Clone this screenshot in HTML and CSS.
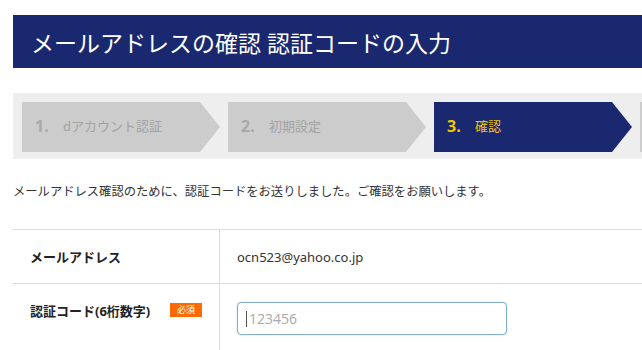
FILE: index.html
```html
<!DOCTYPE html>
<html lang="ja">
<head>
<meta charset="UTF-8">
<meta name="viewport" content="width=device-width, initial-scale=1.0">
<title>メールアドレスの確認 認証コードの入力</title>
<link rel="stylesheet" href="styles.css">
</head>
<body>
<div class="page">
  <h1 class="title-bar">メールアドレスの確認 認証コードの入力</h1>

  <div class="steps">
    <div class="step"><span class="step-num">1.</span><span class="step-label">dアカウント認証</span></div>
    <div class="step"><span class="step-num">2.</span><span class="step-label">初期設定</span></div>
    <div class="step current"><span class="step-num">3.</span><span class="step-label">確認</span></div>
    <div class="step"></div>
  </div>

  <p class="lead">メールアドレス確認のために、認証コードをお送りしました。ご確認をお願いします。</p>

  <div class="form-table">
    <div class="cell label">メールアドレス</div>
    <div class="cell value">ocn523@yahoo.co.jp</div>

    <div class="cell label top"><span>認証コード(6桁数字)</span><span class="required">必須</span></div>
    <div class="cell value top">
      <div class="code-field">
        <input type="text" class="code-input" placeholder="123456">
        <span class="caret"></span>
      </div>
    </div>
  </div>
</div>
</body>
</html>
```

FILE: styles.css
```css
body {
  margin: 0;
  padding: 0;
  overflow: hidden;
  background: #fff;
  font-family: "Noto Sans", "Noto Sans CJK JP", sans-serif;
  color: #333;
}

.page {
  width: 900px;
  padding: 15px 0 0 13px;
}

.title-bar {
  margin: 0;
  height: 53px;
  padding-left: 18px;
  display: flex;
  align-items: center;
  background-color: #1a2870;
  color: #fff;
  font-size: 23px;
  font-weight: 400;
}

.steps {
  margin-top: 25px;
  height: 66px;
  box-sizing: border-box;
  padding: 9px 0 0 9px;
  background-color: #eeeeee;
  display: flex;
  gap: 8px;
}

.step {
  width: 198px;
  height: 50px;
  flex-shrink: 0;
  box-sizing: border-box;
  padding: 0 0 3px 13px;
  display: flex;
  align-items: center;
  background-color: #cccccc;
  clip-path: polygon(0 0, calc(100% - 20px) 0, 100% 50%, calc(100% - 20px) 100%, 0 100%);
}

.step-num {
  font-family: "Open Sans", "Noto Sans CJK JP", sans-serif;
  font-size: 16px;
  font-weight: 700;
  color: #a8a8a8;
  width: 28px;
}

.step-label {
  font-size: 13px;
  color: #a3a3a3;
}

.step.current {
  background-color: #1a2870;
}

.step.current .step-num,
.step.current .step-label {
  color: #f4c400;
}

.lead {
  margin: 24px 0 0;
  font-size: 12.3px;
  line-height: 18px;
  color: #333;
}

.form-table {
  margin-top: 28px;
  width: 700px;
  border-top: 1px solid #dcdcdc;
  display: grid;
  grid-template-columns: 207px 1fr;
}

.cell {
  border-bottom: 1px solid #dcdcdc;
  height: 54px;
  display: flex;
  align-items: center;
  box-sizing: border-box;
}

.cell.label {
  border-right: 1px solid #dcdcdc;
  padding: 0 17px;
  font-size: 13px;
  font-weight: 700;
  color: #222;
  justify-content: space-between;
}

.cell.value {
  padding-left: 17px;
  font-size: 13px;
  color: #333;
}

.cell.top {
  height: 80px;
  align-items: flex-start;
  padding-top: 18px;
}

.cell.label.top {
  padding-top: 19px;
  line-height: 16px;
}

.required {
  display: inline-block;
  width: 32px;
  height: 14px;
  line-height: 14px;
  text-align: center;
  background-color: #ff6a00;
  color: #fff;
  font-size: 9px;
  font-weight: 400;
}

.code-field {
  position: relative;
}

.code-input {
  width: 270px;
  height: 33px;
  box-sizing: border-box;
  margin: 0;
  padding: 0 0 0 11px;
  border: 1px solid #87adcc;
  border-radius: 4px;
  box-shadow: 0 0 2px rgba(120, 165, 200, 0.4);
  font-family: "Open Sans", sans-serif;
  font-size: 14px;
  color: #333;
  outline: none;
}

.code-input::placeholder {
  color: #a8a8a8;
}

.caret {
  position: absolute;
  left: 9px;
  top: 9px;
  width: 1px;
  height: 16px;
  background-color: #555;
}
```
